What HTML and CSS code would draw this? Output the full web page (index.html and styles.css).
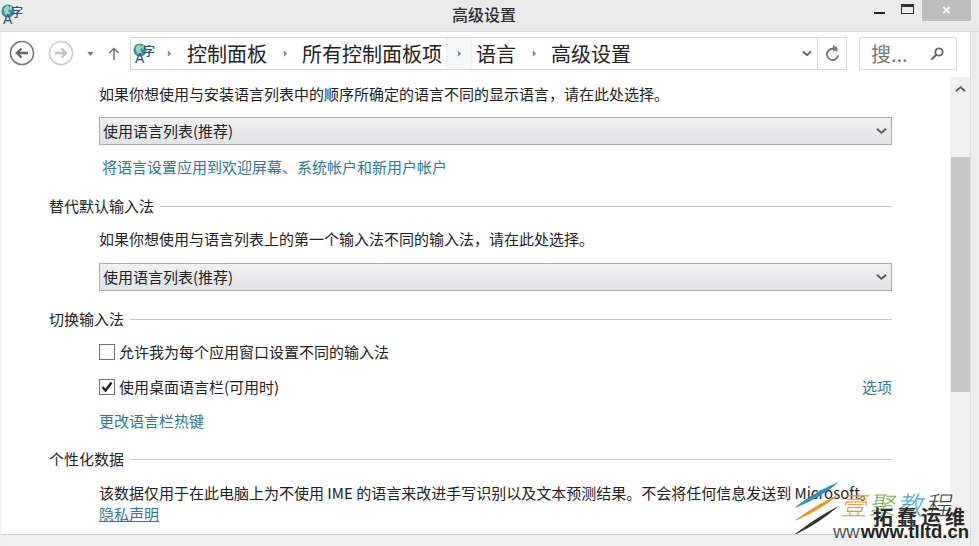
FILE: index.html
```html
<!DOCTYPE html>
<html lang="zh-CN">
<head>
<meta charset="utf-8">
<title>高级设置</title>
<link rel="stylesheet" href="styles.css">
</head>
<body>
<svg class="defs" width="0" height="0" aria-hidden="true">
  <symbol id="lang" viewBox="0 0 16 16">
    <circle cx="8" cy="8" r="7.500" fill="#2f8fb0"/>
    <path d="M3 5l4-3.500 3.500 3-2.500 3 2.500 3.500-4 3.500-2.500-4.500zM10.500 1.500l3 2.500-1 3.500-2.500-1z" fill="#9ad6b0"/>
  </symbol>
  <symbol id="tri" viewBox="0 0 6 10"><path d="M1 1l4 4-4 4z" fill="#8c8c8c"/></symbol>
  <symbol id="chev" viewBox="0 0 12 8"><path d="M1 1.500l5 4.500 5-4.500" fill="none" stroke="#555" stroke-width="2"/></symbol>
</svg>
<div class="window">
  <header class="titlebar">
    <span class="lang-icon title-icon"><svg class="globe"><use href="#lang"/></svg><span class="glyph-a">A</span><span class="glyph-zi">字</span></span>
    <span class="title">高级设置</span>
    <div class="controls">
      <span class="min"></span>
      <span class="max"></span>
      <span class="close">×</span>
    </div>
  </header>
  <div class="body">
    <nav class="nav">
      <svg class="nav-btn" viewBox="0 0 26 26"><circle cx="13" cy="13" r="11.500" fill="none" stroke="#777" stroke-width="1.600"/><path d="M19 13H8M12.500 8.500L8 13l4.500 4.500" fill="none" stroke="#666" stroke-width="2.400"/></svg>
      <svg class="nav-btn fwd" viewBox="0 0 26 26"><circle cx="13" cy="13" r="11.500" fill="none" stroke="#ccc" stroke-width="1.600"/><path d="M7 13h11M13.500 8.500L18 13l-4.500 4.500" fill="none" stroke="#c4c4c4" stroke-width="2.400"/></svg>
      <svg class="drop" viewBox="0 0 8 5"><path d="M0 0h8L4 5z" fill="#777"/></svg>
      <svg class="up" viewBox="0 0 14 16"><path d="M7 16V2M1.500 7.500L7 2l5.500 5.500" fill="none" stroke="#666" stroke-width="1.600"/></svg>
      <div class="address">
        <span class="lang-icon addr-icon"><svg class="globe"><use href="#lang"/></svg><span class="glyph-a">A</span><span class="glyph-zi">字</span></span>
        <svg class="tri"><use href="#tri"/></svg>
        <span class="crumb">控制面板</span>
        <svg class="tri"><use href="#tri"/></svg>
        <span class="crumb">所有控制面板项</span>
        <span class="tri-box"><svg class="tri"><use href="#tri"/></svg></span>
        <span class="crumb">语言</span>
        <svg class="tri"><use href="#tri"/></svg>
        <span class="crumb">高级设置</span>
        <svg class="addr-chev"><use href="#chev"/></svg>
        <span class="refresh">
          <svg viewBox="0 0 16 18" width="15" height="17"><path d="M13 6.500A6 6 0 1 0 14 11" fill="none" stroke="#777" stroke-width="2"/><path d="M8.500 0v7L14 3.500z" fill="#777"/></svg>
        </span>
      </div>
      <div class="search">
        <span class="search-text">搜...</span>
        <svg class="search-icon" viewBox="0 0 14 14"><circle cx="9" cy="5" r="3.700" fill="none" stroke="#666" stroke-width="1.800"/><path d="M6.500 7.500L1.500 12.500" stroke="#666" stroke-width="2.200"/></svg>
      </div>
    </nav>
    <div class="main">
      <main class="content">
        <p class="text first">如果你想使用与安装语言列表中的顺序所确定的语言不同的显示语言，请在此处选择。</p>
        <div class="select"><span>使用语言列表(推荐)</span><svg class="sel-chev"><use href="#chev"/></svg></div>
        <a class="link apply">将语言设置应用到欢迎屏幕、系统帐户和新用户帐户</a>

        <h2 class="heading h-ime"><span>替代默认输入法</span></h2>
        <p class="text ime-text">如果你想使用与语言列表上的第一个输入法不同的输入法，请在此处选择。</p>
        <div class="select select-two"><span>使用语言列表(推荐)</span><svg class="sel-chev"><use href="#chev"/></svg></div>

        <h2 class="heading h-switch"><span>切换输入法</span></h2>
        <label class="check-row"><span class="box"></span>允许我为每个应用窗口设置不同的输入法</label>
        <label class="check-row second"><span class="box"><svg viewBox="0 0 14 14" width="14" height="14"><path d="M2.500 7l3 3.500 6-8" fill="none" stroke="#222" stroke-width="2.400"/></svg></span>使用桌面语言栏(可用时)<a class="link option">选项</a></label>
        <a class="link hotkey">更改语言栏热键</a>

        <h2 class="heading h-data"><span>个性化数据</span></h2>
        <p class="text data">该数据仅用于在此电脑上为不使用 IME 的语言来改进手写识别以及文本预测结果。不会将任何信息发送到 Microsoft。</p>
        <a class="link privacy">隐私声明</a>
      </main>
      <div class="scrollbar">
        <svg class="sb-up" viewBox="0 0 12 8"><path d="M1 6.500L6 2l5 4.500" fill="none" stroke="#555" stroke-width="2"/></svg>
        <div class="thumb"></div>
      </div>
    </div>
    <div class="statusbar"></div>
  </div>
  <div class="edge"></div>
</div>
<div class="watermark">
  <svg class="wm-strokes" viewBox="0 0 60 60"><path d="M0 29Q28 8 51 0Q30 18 2 29z" fill="#2d8fc0"/><path d="M0 44Q28 24 51 14Q30 32 2 44z" fill="#e8962e"/><path d="M0 60Q26 40 50 28Q30 46 2 60z" fill="#333"/></svg>
  <span class="wm-cn1"><i class="o">壹</i><i class="g">聚</i><i class="b">教</i><i class="k">程</i></span>
  <span class="wm-cn2">拓蠢运维</span>
  <span class="wm-url"><i>ww</i>www.tlltd.cn</span>
</div>
</body>
</html>
```
FILE: styles.css
```css
* { box-sizing: border-box; }
html, body { margin: 0; height: 100%; overflow: hidden; background: #fff; }
body { font-family: "Noto Sans CJK SC", "Liberation Sans", sans-serif; color: #222; position: relative; }
.defs { position: absolute; }
.lang-icon { position: relative; display: block; width: 22px; height: 21px; flex: none; }
.globe { position: absolute; left: 0; top: 0; width: 14px; height: 14px; }
.glyph-a { position: absolute; left: 2px; top: 8px; font: 400 14px/14px "Liberation Sans", sans-serif; color: #2a4a78; }
.glyph-zi { position: absolute; left: 10px; top: 1px; font: 500 12px/14px "Noto Sans CJK SC", sans-serif; color: #2b4d74; }
.window { width: 979px; height: 546px; display: grid; grid-template-columns: 1fr 9px; grid-template-rows: 32px 1fr; background: #ececec; }
.titlebar { grid-column: 1 / 3; display: flex; align-items: center; position: relative; background: #ebebeb; border-bottom: 1px solid #d6d6d6; }
.title-icon { margin: 0 0 3px 1px; }
.title { position: absolute; left: 452px; top: 3px; font-size: 16px; line-height: 22px; font-weight: 500; color: #2c2c2c; }
.controls { margin-left: auto; margin-right: 8px; align-self: flex-start; display: flex; align-items: flex-start; }
.min { width: 11px; height: 2px; background: #222; margin: 12px 16px 0 0; }
.max { width: 13px; height: 10px; border: 1px solid #333; border-top-width: 3px; margin: 4px 8px 0 0; }
.close { width: 49px; height: 21px; background: #bdbdbd; color: #fff; text-align: center; font: bold 15px/19px "Liberation Sans", sans-serif; }
.body { display: flex; flex-direction: column; min-height: 0; background: #fff; border-left: 1px solid #eee; }
.nav { height: 48px; display: flex; align-items: flex-start; padding: 5px 0 0 8px; flex: none; }
.nav-btn { width: 26px; height: 26px; margin-top: 3px; flex: none; }
.fwd { margin-left: 13px; }
.drop { width: 7px; height: 4px; margin: 15px 0 0 13px; flex: none; }
.up { width: 12px; height: 15px; margin: 9px 0 0 14px; flex: none; }
.address { margin-left: 10px; width: 717px; height: 33px; border: 1px solid #d9d9d9; display: flex; align-items: center; flex: none; padding-left: 1px; }
.addr-icon { margin-left: 1px; }
.tri { width: 5px; height: 9px; flex: none; }
.address > .tri { margin: 0 14.500px 0 15.500px; }
.address > .addr-icon + .tri { margin: 0 15px 0 12px; }
.crumb { font-size: 20px; line-height: 28px; color: #222; white-space: nowrap; }
.tri-box { width: 26px; height: 31px; margin: 0 4px 0 4px; background: #f4f8fa; border: 1px solid #eef1f3; border-width: 0 1px; display: flex; align-items: center; justify-content: center; flex: none; }
.addr-chev { width: 10px; height: 7px; margin-left: auto; flex: none; }
.refresh { width: 29px; height: 31px; margin-left: 5px; border-left: 1px solid #d9d9d9; display: flex; align-items: center; justify-content: center; flex: none; }
.search { margin-left: 12px; width: 98px; height: 33px; border: 1px solid #d9d9d9; display: flex; align-items: center; justify-content: space-between; padding: 0 12px 0 11px; flex: none; }
.search-text { font-size: 20px; line-height: 28px; color: #777; }
.search-icon { width: 14px; height: 14px; }
.main { flex: 1; min-height: 0; display: flex; }
.content { flex: 1; min-width: 0; padding: 0 58px 0 48px; position: relative; overflow: hidden; }
.text { margin: 0; padding-left: 50px; font-size: 15px; line-height: 22px; color: #222; white-space: nowrap; }
.first { margin-top: 3px; }
.select { margin: 12px 0 0 50px; height: 28px; border: 1px solid #adadad; background: linear-gradient(#f1f1f3, #e3e4e7); display: flex; align-items: center; justify-content: space-between; padding: 0 4px 2px 3px; font-size: 15px; color: #222; }
.select-two { margin-top: 13px; }
.sel-chev { width: 11px; height: 8px; margin-top: 2px; }
.link { display: block; color: #2f7a93; font-size: 15px; line-height: 22px; white-space: nowrap; }
.apply { margin: 11px 0 0 53px; }
.heading { margin: 0; display: flex; align-items: center; gap: 6px; font-size: 15px; font-weight: 400; line-height: 22px; color: #222; }
.heading::after { content: ""; flex: 1; height: 1px; background: #c4c4c4; }
.h-ime { margin-top: 17px; }
.ime-text { margin-top: 11px; }
.h-switch { margin-top: 17px; }
.check-row { display: flex; align-items: center; margin: 10px 0 0 50px; font-size: 15px; line-height: 24px; color: #222; white-space: nowrap; }
.box { width: 16px; height: 16px; border: 1px solid #707070; background: #fff; margin-right: 4px; display: flex; align-items: center; justify-content: center; flex: none; }
.second { margin-top: 11px; }
.option { margin-left: auto; }
.hotkey { margin: 11px 0 0 50px; }
.h-data { margin-top: 16px; }
.data { margin-top: 12px; line-height: 22px; }
.privacy { margin: 0 0 0 50px; line-height: 20px; width: max-content; text-decoration: underline; }
.scrollbar { width: 20px; flex: none; background: #f0f0f0; margin-top: -3px; display: flex; flex-direction: column; align-items: center; }
.sb-up { width: 11px; height: 8px; margin-top: 8px; flex: none; }
.thumb { width: 19px; height: 235px; margin-top: 64px; background: #c8c8c8; flex: none; }
.statusbar { height: 12px; flex: none; background: #f0f0f0; border-top: 1px solid #cfcfcf; }
.edge { background: #ececec; border-left: 1px solid #dcdcdc; }
.watermark { position: absolute; left: 795px; top: 473px; width: 184px; height: 73px; }
.wm-strokes { position: absolute; left: 0; top: 0; width: 52px; height: 70px; }
.wm-cn1 { position: absolute; left: 48px; top: 14px; font-size: 26px; line-height: 34px; letter-spacing: 2px; white-space: nowrap; transform: skewX(-12deg); }
.wm-cn1 i { font-style: normal; font-weight: 300; }
.wm-cn1 .o { color: #e8962e; }
.wm-cn1 .g { color: #7ab648; }
.wm-cn1 .b { color: #45a8d0; }
.wm-cn1 .k { color: #444; }
.wm-cn2 { position: absolute; left: 78px; top: 31px; font-size: 20px; line-height: 26px; font-weight: 700; color: #2a2a2a; white-space: nowrap; letter-spacing: 4px; text-shadow: 0 0 2px #fff; }
.wm-url { position: absolute; left: 38px; top: 48px; font: 700 18.500px/22px "Liberation Sans", sans-serif; color: #222; white-space: nowrap; text-shadow: 0 0 2px #fff; }
.wm-url i { font-style: normal; font-weight: 400; color: #555; margin-right: 1px; }
```
